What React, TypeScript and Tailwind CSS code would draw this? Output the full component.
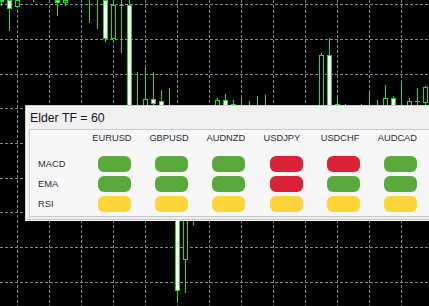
import React from "react";

type Candle = { x: number; top?: number; bottom?: number; fill?: "white" | "black"; wick?: [number, number] };

// body left x = 7 + 8k, wick x = body + 2
const candles: Candle[] = [
  { x: -1, top: 0, bottom: 1, fill: "black", wick: [1, 5] },
  { x: 7, top: 0, bottom: 8, fill: "white", wick: [8, 30] },
  { x: 15, top: 0, bottom: 6, fill: "black" },
  { x: 31, wick: [0, 1] },
  { x: 55, top: 0, bottom: 2, fill: "white", wick: [2, 15] },
  { x: 63, top: 0, bottom: 2, fill: "black", wick: [2, 5] },
  { x: 87, wick: [0, 22] },
  { x: 95, wick: [0, 28] },
  { x: 103, top: 0, bottom: 38, fill: "white", wick: [38, 41] },
  { x: 111, top: 5, bottom: 38, fill: "black", wick: [0, 5] },
  { x: 119, top: 5, bottom: 5, wick: [0, 52] },
  { x: 127, top: 5, bottom: 120, fill: "white", wick: [0, 5] },
  { x: 135, wick: [72, 106] },
  { x: 143, top: 99, bottom: 120, fill: "black", wick: [68, 99] },
  { x: 151, top: 99, bottom: 103, fill: "white", wick: [72, 106] },
  { x: 159, top: 101, bottom: 120, fill: "white", wick: [90, 101] },
  { x: 167, wick: [88, 106] },
  { x: 175, top: 200, bottom: 290, fill: "white", wick: [290, 301] },
  { x: 183, top: 200, bottom: 259, fill: "black", wick: [259, 292] },
  { x: 191, wick: [200, 224] },
  { x: 215, top: 100, bottom: 120, fill: "black", wick: [98, 100] },
  { x: 223, top: 100, bottom: 120, fill: "white", wick: [94, 100] },
  { x: 231, top: 104, bottom: 104, wick: [100, 106] },
  { x: 239, wick: [98, 106] },
  { x: 247, wick: [101, 106] },
  { x: 255, wick: [96, 106] },
  { x: 263, wick: [95, 106] },
  { x: 319, top: 55, bottom: 120, fill: "black", wick: [53, 55] },
  { x: 327, top: 55, bottom: 120, fill: "white", wick: [38, 55] },
  { x: 335, top: 104, bottom: 104, wick: [95, 106] },
  { x: 343, wick: [104, 106] },
  { x: 359, wick: [104, 106] },
  { x: 367, wick: [92, 106] },
  { x: 375, wick: [100, 106] },
  { x: 383, top: 98, bottom: 120, fill: "black", wick: [85, 98] },
  { x: 391, top: 98, bottom: 120, fill: "white", wick: [96, 98] },
  { x: 399, wick: [83, 106] },
  { x: 407, top: 101, bottom: 120, fill: "black", wick: [98, 101] },
  { x: 415, top: 101, bottom: 101, wick: [88, 106] },
  { x: 423, top: 87, bottom: 102, fill: "black", wick: [86, 106] },
];

const vLines = Array.from({ length: 13 }, (_, i) => 17 + 32 * i);
const hLines = [4, 39, 74, 108, 143, 178, 212, 247, 282];

const LIME = "#1fe01f";

function Chart() {
  return (
    <svg className="absolute inset-0" width={429} height={306} shapeRendering="crispEdges">
      <rect width={429} height={306} fill="#000" />
      {vLines.map((x) => (
        <line key={"v" + x} x1={x + 0.5} y1={0} x2={x + 0.5} y2={306} stroke="#778899" strokeDasharray="3 2" />
      ))}
      {hLines.map((y) => (
        <line key={"h" + y} x1={0} y1={y + 0.5} x2={429} y2={y + 0.5} stroke="#778899" strokeDasharray="3 2" />
      ))}
      {candles.map((c, i) => (
        <g key={i}>
          {c.wick && (
            <line x1={c.x + 2.5} y1={c.wick[0]} x2={c.x + 2.5} y2={c.wick[1] + 1} stroke={LIME} />
          )}
          {c.top !== undefined && c.bottom !== undefined && (
            c.top === c.bottom ? (
              <line x1={c.x} y1={c.top + 0.5} x2={c.x + 5} y2={c.top + 0.5} stroke={LIME} />
            ) : (
              <rect
                x={c.x + 0.5}
                y={c.top + 0.5}
                width={4}
                height={c.bottom - c.top}
                fill={c.fill === "white" ? "#fff" : "#000"}
                stroke={LIME}
              />
            )
          )}
        </g>
      ))}
    </svg>
  );
}

const pairs = ["EURUSD", "GBPUSD", "AUDNZD", "USDJPY", "USDCHF", "AUDCAD"];

const G = "bg-[#5aaa3b]";
const R = "bg-[#dc2238]";
const Y = "bg-[#fed538]";

const rows = [
  { name: "MACD", cells: [G, G, G, R, R, G] },
  { name: "EMA", cells: [G, G, G, R, G, G] },
  { name: "RSI", cells: [Y, Y, Y, Y, Y, Y] },
];

export default function App() {
  return (
    <div className="relative w-[429px] h-[306px] overflow-hidden bg-black font-['Liberation_Sans',Arial,sans-serif]">
      <Chart />

      {/* indicator panel */}
      <div className="absolute left-[25px] top-[105px] w-[420px] h-[116px] border-t border-l border-b border-t-[#cfcfcf] border-l-[#cfcfcf] border-b-white">
        <div className="h-full flex flex-col border-t border-l border-b border-t-white border-l-white border-b-[#c4c4c4] bg-[#f0f0f0]">
          <div className="h-[22px] leading-[22px] pl-[3px] text-[12.3px] text-[#14141f]">Elder TF = 60</div>

          <div className="ml-[2px] h-[88px] border border-[#c8c8c8] bg-[#f7f7f7] text-[9.3px] text-[#2a2a3a]">
            <div className="grid grid-cols-[56.3px_repeat(6,57.1px)] h-[17px] items-center">
              <div />
              {pairs.map((p) => (
                <div key={p} className="pl-[6px] leading-[17px]">
                  {p}
                </div>
              ))}
            </div>

            <div className="mt-[9px] flex flex-col gap-[4px]">
              {rows.map((r) => (
                <div key={r.name} className="grid grid-cols-[56.3px_repeat(6,57.1px)] h-[16px] items-center">
                  <div className="pl-[8px] leading-[16px]">{r.name}</div>
                  {r.cells.map((c, i) => (
                    <div key={i} className="pl-[12px]">
                      <div className={`w-[33px] h-[16px] rounded-[6px] ${c}`} />
                    </div>
                  ))}
                </div>
              ))}
            </div>
          </div>
        </div>
      </div>
    </div>
  );
}
